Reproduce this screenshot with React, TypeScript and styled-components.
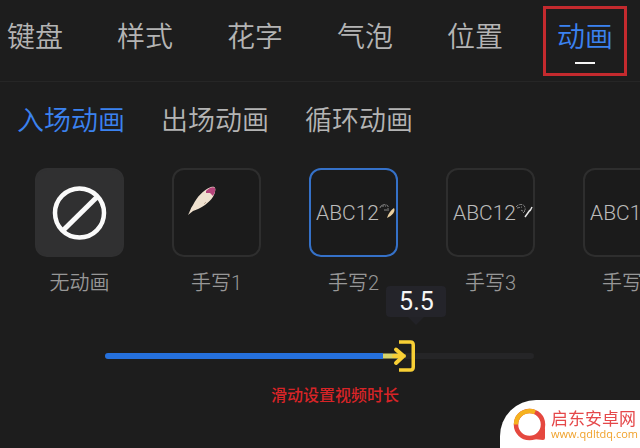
import React, { useState } from "react";
import styled, { createGlobalStyle, css } from "styled-components";

const cjk = '"Noto Sans CJK SC", sans-serif';

const GlobalStyle = createGlobalStyle`
  *, *::before, *::after { box-sizing: border-box; }
  html, body { margin: 0; background: #1d1d1d; }
  body { font-family: Roboto, ${cjk}; overflow: hidden; }
  button { font: inherit; color: inherit; border: 0; background: none; padding: 0; cursor: pointer; }
`;

const Page = styled.main`
  min-height: 100vh;
  overflow: hidden;
  background: #1d1d1d;
  color: #b4b4b4;
`;

const TabBar = styled.nav`
  display: flex;
  gap: 54px;
  height: 82px;
  padding: 6px 0 0 7px;
  border-bottom: 1px solid #262626;
`;

const Tab = styled.button<{ $active: boolean }>`
  position: relative;
  flex: none;
  height: 70px;
  padding-bottom: 12px;
  font-family: ${cjk};
  font-size: 28px;
  font-weight: 350;
  line-height: 40px;
  white-space: nowrap;
  ${(p) =>
    p.$active &&
    css`
      color: #3b82f0;
      &::before {
        content: "";
        position: absolute;
        inset: 0 -14px;
        border: 3px solid #c42a2e;
      }
      &::after {
        content: "";
        position: absolute;
        left: 50%;
        bottom: 12px;
        width: 20px;
        height: 2px;
        margin-left: -10px;
        background: #f4f4f4;
      }
    `}
`;

const SubTabs = styled.nav`
  display: flex;
  gap: 36px;
  padding: 17px 17px 0;
`;

const SubTab = styled.button<{ $active: boolean }>`
  flex: none;
  font-family: ${cjk};
  font-size: 27px;
  font-weight: 350;
  line-height: 40px;
  white-space: nowrap;
  color: ${(p) => (p.$active ? "#3b82f0" : "#b4b4b4")};
`;

const Presets = styled.section`
  display: flex;
  gap: 48px;
  padding: 29px 0 0 35px;
`;

const Preset = styled.button`
  display: flex;
  flex: none;
  flex-direction: column;
  align-items: center;
  gap: 12px;
  width: 89px;
  font-family: Roboto, ${cjk};
  font-size: 20px;
  font-weight: 350;
  line-height: 28px;
  color: #979797;
`;

const Thumb = styled.span<{ $kind: "plain" | "filled" | "selected" }>`
  display: flex;
  align-items: center;
  width: 89px;
  height: 89px;
  padding-left: 5px;
  overflow: hidden;
  border-radius: 12px;
  border: 2px solid
    ${(p) => (p.$kind === "selected" ? "#3571c8" : p.$kind === "filled" ? "#303031" : "#2e2e2e")};
  background: ${(p) => (p.$kind === "filled" ? "#303031" : "#1b1b1b")};
  font-size: 21px;
  color: #bcbcbc;

  svg { flex: none; }
`;

const DurationArea = styled.section`
  display: flex;
  flex-direction: column;
  padding: 43px 106px 0 105px;
`;

const Slider = styled.div`
  position: relative;
  height: 32px;
  display: flex;
  align-items: center;
`;

const Track = styled.div`
  flex: 1;
  height: 6px;
  border-radius: 3px;
  background: #252527;
  overflow: hidden;
`;

const Fill = styled.div`
  height: 6px;
  border-right: 32px solid #252527;
  background: #2570dc;
  background-clip: padding-box;
`;

const Handle = styled.div`
  position: absolute;
  top: 0;
  height: 32px;
  pointer-events: none;
  svg { position: absolute; right: 0; top: 0; }
`;

const Bubble = styled.output`
  position: absolute;
  bottom: 55px;
  left: -29px;
  width: 60px;
  border-radius: 4px;
  background: #24242a;
  color: #f5f5f5;
  font-size: 25px;
  line-height: 31px;
  text-align: center;

  &::after {
    content: "";
    position: absolute;
    top: 100%;
    left: 22px;
    border: 8px solid transparent;
    border-top-color: #222227;
    border-bottom: 0;
  }
`;

const Range = styled.input`
  position: absolute;
  inset: 0;
  width: 100%;
  height: 32px;
  margin: 0;
  opacity: 0;
  cursor: pointer;
`;

const HintRow = styled.div`
  display: flex;
  justify-content: center;
  padding: 10px 0 0 30px;
`;

const Hint = styled.label`
  font-family: ${cjk};
  font-size: 16px;
  font-weight: 500;
  line-height: 24px;
  white-space: nowrap;
  color: #d82427;
`;

const SiteBadge = styled.a`
  position: fixed;
  right: 0;
  bottom: 0;
  display: flex;
  align-items: center;
  gap: 4px;
  width: 140px;
  height: 48px;
  padding: 2px 0 0 13px;
  border-top-left-radius: 36px;
  background: #fff;
  text-decoration: none;
`;

const SiteText = styled.span`
  display: flex;
  flex-direction: column;
`;

const SiteName = styled.span`
  font-family: ${cjk};
  font-size: 17px;
  line-height: 18px;
  white-space: nowrap;
  color: #e5484a;
`;

const SiteUrl = styled.span`
  font-family: "Open Sans", sans-serif;
  font-size: 11px;
  line-height: 14px;
  white-space: nowrap;
  color: #f0a22c;
`;

const NoneIcon = () => (
  <svg width="75" height="60" viewBox="0 0 75 60" fill="none" stroke="#fafafa" aria-hidden="true">
    <circle cx="37.500" cy="30" r="24.500" strokeWidth="4.500" />
    <path d="M21.500 47 55 14" strokeWidth="5" />
  </svg>
);

const FeatherIcon = () => (
  <svg width="75" height="85" viewBox="0 0 75 85" aria-hidden="true">
    <path d="M9 45C11 42 11 39 14 35C18 27 24 20 32 17C36 16 37 18 36 22C35 27 31 31 26 35C22 38 17 40 14 41Z" fill="#efe1cf" />
    <path d="M27 21C30 18 34 16 36 18C37 21 35 24 34 26L31 23L27 23Z" fill="#b4447a" />
    <path d="M25 34L27 32" stroke="#b59a87" strokeWidth="0.800" fill="none" />
  </svg>
);

const QuillIcon = ({ light = false }: { light?: boolean }) => (
  <svg width="18" height="22" viewBox="1 0 18 22" fill="none" aria-hidden="true">
    <path
      d={light ? "M1 5C4 1 10 2 10 6C11 9 8 10 6 8M2 6L7 5M10 9L8 11" : "M2 6C2 2 9 2 10 4L10 10M3 4L8 4M6 8L10 8"}
      stroke="#858585"
      strokeWidth="1"
      strokeDasharray="3 1"
    />
    {light ? (
      <path d="M10 15L15 8M15 9L17 5" stroke="#e5e5e5" strokeWidth="1.500" />
    ) : (
      <path d="M9 16C10 12 13 8 16 6C18 9 14 14 9 16Z" fill="#e8cfa0" />
    )}
  </svg>
);

const HandleIcon = () => (
  <svg width="32" height="32" viewBox="0 0 32 32" fill="none" aria-hidden="true">
    <path d="M0 16H18" stroke="#d6d469" strokeWidth="5" />
    <path d="M16 2H27.500Q30.250 2 30.250 5V27Q30.250 30 27.500 30H16" stroke="#f8cf35" strokeWidth="3.500" />
    <path d="M11 16H21M13 9.500L20.500 16L13 23" stroke="#f8cf35" strokeWidth="4" strokeLinecap="round" strokeLinejoin="round" />
  </svg>
);

const SiteLogo = () => (
  <svg width="34" height="34" viewBox="0 0 34 34" fill="none" aria-hidden="true">
    <path d="M22 24L32 20V30Q32 32 30 32L20 31Z" fill="#e5483f" />
    <circle cx="16.500" cy="16.500" r="13.500" fill="#fff" stroke="#e5483f" strokeWidth="4.500" />
    <path d="M3 16.500A13.500 13.500 0 0 1 22 4.200" stroke="#f5b21f" strokeWidth="4.500" />
  </svg>
);

const tabs = ["键盘", "样式", "花字", "气泡", "位置", "动画"];
const subTabs = ["入场动画", "出场动画", "循环动画"];
const presets = [
  { label: "无动画", art: <NoneIcon /> },
  { label: "手写1", art: <FeatherIcon /> },
  { label: "手写2", art: <>ABC12<QuillIcon /></> },
  { label: "手写3", art: <>ABC12<QuillIcon light /></> },
  { label: "手写4", art: <>ABC12<QuillIcon /></> },
];

const MIN = 0;
const MAX = 7.6;

export default function App() {
  const [tab, setTab] = useState("动画");
  const [subTab, setSubTab] = useState("入场动画");
  const [preset, setPreset] = useState("手写2");
  const [seconds, setSeconds] = useState(5.5);
  const percent = ((seconds - MIN) / (MAX - MIN)) * 100;

  return (
    <Page>
      <GlobalStyle />
      <TabBar>
        {tabs.map((t) => (
          <Tab key={t} $active={t === tab} onClick={() => setTab(t)}>{t}</Tab>
        ))}
      </TabBar>
      <SubTabs>
        {subTabs.map((t) => (
          <SubTab key={t} $active={t === subTab} onClick={() => setSubTab(t)}>{t}</SubTab>
        ))}
      </SubTabs>
      <Presets>
        {presets.map(({ label, art }, i) => (
          <Preset key={label} aria-pressed={label === preset} onClick={() => setPreset(label)}>
            <Thumb $kind={label === preset ? "selected" : i === 0 ? "filled" : "plain"}>{art}</Thumb>
            {label}
          </Preset>
        ))}
      </Presets>
      <DurationArea>
        <Slider>
          <Track>
            <Fill style={{ width: `${percent}%` }} />
          </Track>
          <Handle style={{ left: `${percent}%` }}>
            <Bubble htmlFor="duration">{seconds.toFixed(1)}</Bubble>
            <HandleIcon />
          </Handle>
          <Range
            id="duration"
            type="range"
            min={MIN}
            max={MAX}
            step={0.1}
            value={seconds}
            onChange={(e) => setSeconds(Number(e.target.value))}
          />
        </Slider>
      </DurationArea>
      <HintRow>
        <Hint htmlFor="duration">滑动设置视频时长</Hint>
      </HintRow>
      <SiteBadge href="#">
        <SiteLogo />
        <SiteText>
          <SiteName>启东安卓网</SiteName>
          <SiteUrl>www.qdltdq.com</SiteUrl>
        </SiteText>
      </SiteBadge>
    </Page>
  );
}
